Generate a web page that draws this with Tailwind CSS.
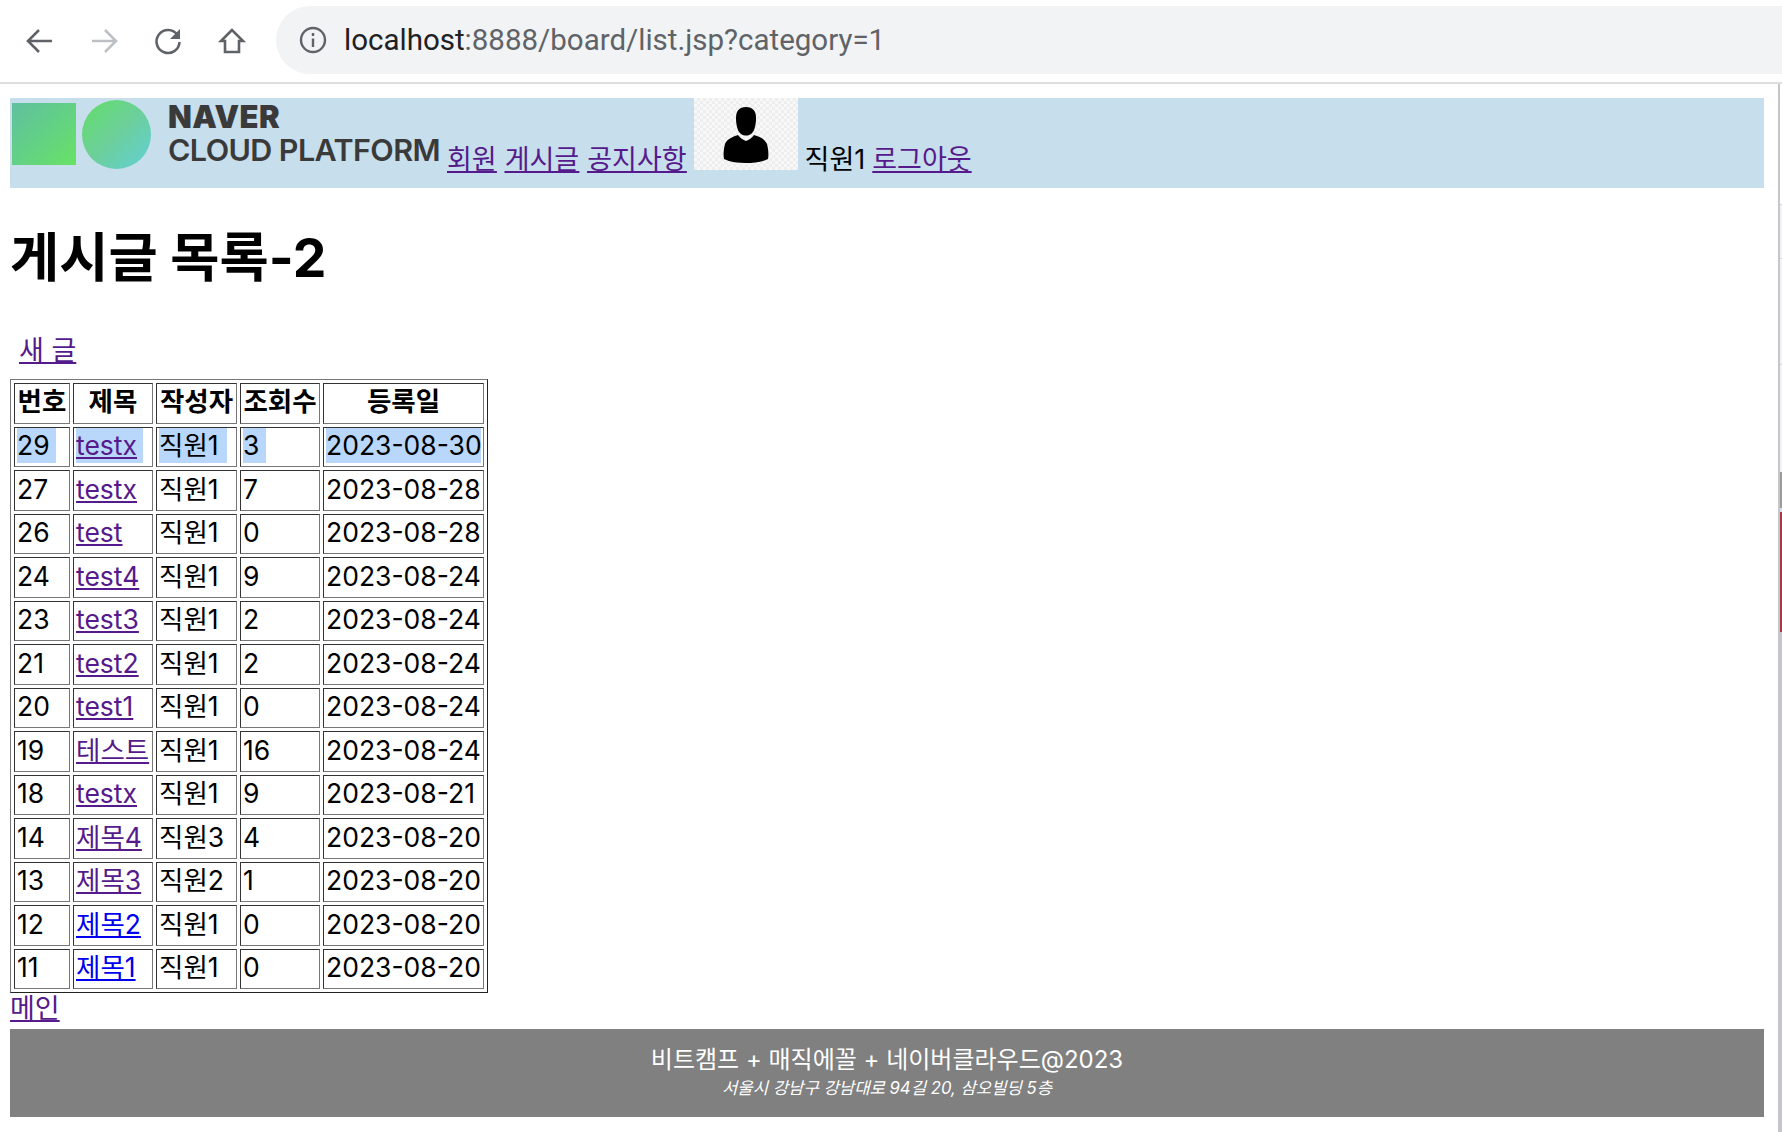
<!DOCTYPE html>
<html lang="ko">
<head>
  <meta charset="UTF-8">
  <title>게시글 목록</title>
  <script src="https://cdn.jsdelivr.net/npm/@tailwindcss/browser@4"></script>
</head>
<body class="bg-white text-black h-[1132px] overflow-hidden font-['Inter','Noto_Sans_CJK_KR',sans-serif] text-[26.5px] leading-[32px]">

  <!-- Browser toolbar -->
  <div class="h-[84px] border-b-2 border-[#dedede] flex items-center">
    <div class="flex items-center w-[276px] shrink-0">
      <svg class="ml-[24px] w-[32px] h-[32px]" viewBox="0 0 32 32" fill="none" stroke="#5f6368" stroke-width="2.6"><path d="M28 16H5M15 5 4 16l11 11"/></svg>
      <svg class="ml-[32px] w-[32px] h-[32px]" viewBox="0 0 32 32" fill="none" stroke="#bdc1c6" stroke-width="2.6"><path d="M4 16h23M17 5l11 11-11 11"/></svg>
      <svg class="ml-[32px] w-[32px] h-[32px]" viewBox="0 0 32 32" fill="none"><path d="M25.5 10A11.5 11.5 0 1 0 27.5 17" stroke="#5f6368" stroke-width="2.6"/><path d="M28 4v10H18z" fill="#5f6368"/></svg>
      <svg class="ml-[32px] w-[32px] h-[32px]" viewBox="0 0 32 32" fill="none" stroke="#5f6368" stroke-width="2.6"><path d="M16 5 5 16h4v11h14V16h4z"/></svg>
    </div>
    <div class="flex-1 h-[68px] -mt-[2px] bg-[#f1f3f4] rounded-l-[34px] flex items-center pl-[23px] text-[29.5px] font-['Roboto',sans-serif] text-[#5f6368]">
      <svg class="w-[28px] h-[28px] mr-[17px]" viewBox="0 0 28 28" fill="none" stroke="#5f6368" stroke-width="2.4"><circle cx="14" cy="14" r="12"/><path d="M14 12.5V21M14 7v3"/></svg>
      <span><span class="text-[#202124]">localhost</span>:8888/board/list.jsp?category=1</span>
    </div>
  </div>

  <div class="flex h-[1048px]">
    <div class="w-[1778px] px-[10px] pt-[14px]">

      <!-- Site header -->
      <header class="w-[1754px] h-[90px] bg-[#c7deec] flex items-start">
        <div class="w-[437px] h-[90px] relative shrink-0">
          <div class="absolute left-[2px] top-[5px] w-[64px] h-[62px] bg-gradient-to-br from-[#5fbf9e] to-[#68e262]"></div>
          <div class="absolute left-[72px] top-[2px] w-[69px] h-[69px] rounded-full bg-gradient-to-br from-[#62dd62] via-[#6ccf9a] to-[#62cfd6]"></div>
          <div class="absolute left-[158px] top-[3px] text-[#3a3a3a] font-['Inter',sans-serif] whitespace-nowrap leading-[31px]"><span class="font-black text-[31px] tracking-[0.4px]">NAVER</span><br><span class="font-semibold text-[30.5px] tracking-[-0.6px]">CLOUD PLATFORM</span></div>
        </div>
        <nav class="flex gap-[8px] mt-[46px] text-[#551a8b] underline shrink-0 text-[27px]">
          <a href="#">회원</a>
          <a href="#">게시글</a>
          <a href="#">공지사항</a>
        </nav>
        <div class="w-[104px] h-[72px] ml-[7px] bg-[repeating-conic-gradient(#eeeeee_0_25%,#f8f8f8_0_50%)] bg-[length:6px_6px] shrink-0 flex items-center justify-center">
          <svg class="w-[46px] h-[57px] mt-[2px]" viewBox="0 0 46 57" fill="#000"><path d="M23 0c7 0 10 4 10 11 0 8-2 14-5 16-3 2-7 2-10 0-3-2-5-8-5-16C13 4 16 0 23 0z"/><path d="M15 28c2 3 5 5 8 6 3-1 6-3 8-6 6 2 11 4 13 9 1 4 2 10 1 15-6 3-14 4-22 4S7 55 1 52c-1-5 0-11 1-15 2-5 7-7 13-9z"/></svg>
        </div>
        <div class="flex gap-[7px] ml-[7px] mt-[46px] shrink-0 text-[27px]">
          <span>직원1</span>
          <a href="#" class="text-[#551a8b] underline">로그아웃</a>
        </div>
      </header>

      <h1 class="text-[53.5px] leading-[64px] font-bold mt-[38px]">게시글 목록-2</h1>

      <a href="#" class="inline-block ml-[9px] mt-[45px] h-[40px] text-[#551a8b] underline text-[27px]">새 글</a>

      <!-- Board table -->
      <table class="border-separate border-spacing-[3px] border border-t-[#777] border-l-[#777] border-r-[#222] border-b-[#222] w-[477px] table-fixed mt-[4px]">
        <colgroup>
          <col class="w-[56px]"><col class="w-[80px]"><col class="w-[81px]"><col class="w-[80px]"><col class="w-[161px]">
        </colgroup>
        <thead>
          <tr class="h-[40.6px] [&>th]:border [&>th]:border-t-[#333] [&>th]:border-l-[#333] [&>th]:border-r-[#777] [&>th]:border-b-[#777] [&>th]:p-0 [&>th]:pb-[4px] [&>th]:font-bold [&>th]:whitespace-nowrap">
            <th>번호</th><th>제목</th><th>작성자</th><th>조회수</th><th>등록일</th>
          </tr>
        </thead>
        <tbody class="[&_td]:border [&_td]:border-t-[#333] [&_td]:border-l-[#333] [&_td]:border-r-[#777] [&_td]:border-b-[#777] [&_td]:px-[2px] [&_td]:pt-0 [&_td]:pb-[3px] [&_td]:whitespace-nowrap [&_tr]:h-[40.5px] [&_a]:underline [&_a]:text-[#551a8b]">
          <tr><td><span class="bg-[#b9d7fb] inline-block w-[39px] leading-[35px]">29</span></td><td><span class="bg-[#b9d7fb] inline-block w-[67px] leading-[35px]"><a href="#">testx</a></span></td><td><span class="bg-[#b9d7fb] inline-block w-[68px] leading-[35px]">직원1</span></td><td><span class="bg-[#b9d7fb] inline-block w-[23px] leading-[35px]">3</span></td><td><span class="bg-[#b9d7fb] block leading-[35px]">2023-08-30</span></td></tr>
          <tr><td>27</td><td><a href="#">testx</a></td><td>직원1</td><td>7</td><td>2023-08-28</td></tr>
          <tr><td>26</td><td><a href="#">test</a></td><td>직원1</td><td>0</td><td>2023-08-28</td></tr>
          <tr><td>24</td><td><a href="#">test4</a></td><td>직원1</td><td>9</td><td>2023-08-24</td></tr>
          <tr><td>23</td><td><a href="#">test3</a></td><td>직원1</td><td>2</td><td>2023-08-24</td></tr>
          <tr><td>21</td><td><a href="#">test2</a></td><td>직원1</td><td>2</td><td>2023-08-24</td></tr>
          <tr><td>20</td><td><a href="#">test1</a></td><td>직원1</td><td>0</td><td>2023-08-24</td></tr>
          <tr><td>19</td><td><a href="#">테스트</a></td><td>직원1</td><td>16</td><td>2023-08-24</td></tr>
          <tr><td>18</td><td><a href="#">testx</a></td><td>직원1</td><td>9</td><td>2023-08-21</td></tr>
          <tr><td>14</td><td><a href="#">제목4</a></td><td>직원3</td><td>4</td><td>2023-08-20</td></tr>
          <tr><td>13</td><td><a href="#">제목3</a></td><td>직원2</td><td>1</td><td>2023-08-20</td></tr>
          <tr><td>12</td><td><a href="#" class="!text-[#0000ee]">제목2</a></td><td>직원1</td><td>0</td><td>2023-08-20</td></tr>
          <tr><td>11</td><td><a href="#" class="!text-[#0000ee]">제목1</a></td><td>직원1</td><td>0</td><td>2023-08-20</td></tr>
        </tbody>
      </table>

      <a href="#" class="block w-fit h-[36px] text-[#551a8b] underline text-[27px]">메인</a>

      <!-- Footer -->
      <footer class="w-[1754px] h-[88px] bg-[#808080] text-white text-center pt-[15px]">
        <div class="leading-[32px] text-[24px]">비트캠프 + 매직에꼴 + 네이버클라우드@2023</div>
        <div class="text-[16.7px] leading-[20px] italic mt-[2px]">서울시 강남구 강남대로 94길 20, 삼오빌딩 5층</div>
      </footer>
    </div>

    <!-- Neighbouring window edge -->
    <div class="w-[4px] bg-[#c6c6ca] flex flex-col">
      <div class="ml-[2px] h-[120px] bg-white"></div>
      <div class="ml-[2px] h-[54px] bg-[#f3f3f5] border-t border-[#d8d8d8]"></div>
      <div class="ml-[2px] h-[106px] bg-[#f3f3f5] border-t border-[#d8d8d8]"></div>
      <div class="ml-[2px] h-[106px] bg-[#f3f3f5] border-t border-[#d8d8d8]"></div>
      <div class="ml-[2px] h-[2px] bg-[#f3f3f5]"></div>
      <div class="ml-[2px] h-[36px] bg-[#9a9a9a]"></div>
      <div class="ml-[2px] h-[4px] bg-[#d5e0ee]"></div>
      <div class="ml-[2px] h-[120px] bg-[#a23a46]"></div>
    </div>
  </div>
</body>
</html>
